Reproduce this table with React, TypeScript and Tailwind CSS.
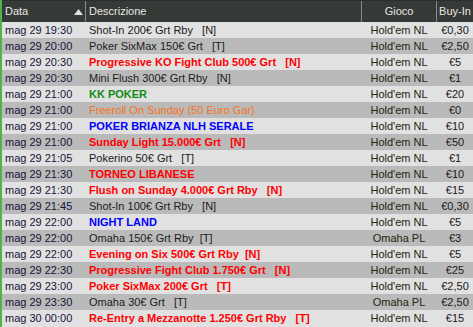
import clsx from "clsx";

type Row = {
  date: string;
  desc: string;
  tone?: "red" | "green" | "orange" | "blue";
  game?: string;
  buyIn: string;
};

const rows: Row[] = [
  { date: "mag 29 19:30", desc: "Shot-In 200€ Grt Rby   [N]", buyIn: "€0,30" },
  { date: "mag 29 20:00", desc: "Poker SixMax 150€ Grt   [T]", buyIn: "€2,50" },
  { date: "mag 29 20:30", desc: "Progressive KO Fight Club 500€ Grt   [N]", tone: "red", buyIn: "€5" },
  { date: "mag 29 20:30", desc: "Mini Flush 300€ Grt Rby   [N]", buyIn: "€1" },
  { date: "mag 29 21:00", desc: "KK POKER", tone: "green", buyIn: "€20" },
  { date: "mag 29 21:00", desc: "Freeroll On Sunday (50 Euro Gar)", tone: "orange", buyIn: "€0" },
  { date: "mag 29 21:00", desc: "POKER BRIANZA NLH SERALE", tone: "blue", buyIn: "€10" },
  { date: "mag 29 21:00", desc: "Sunday Light 15.000€ Grt   [N]", tone: "red", buyIn: "€50" },
  { date: "mag 29 21:05", desc: "Pokerino 50€ Grt   [T]", buyIn: "€1" },
  { date: "mag 29 21:30", desc: "TORNEO LIBANESE", tone: "red", buyIn: "€10" },
  { date: "mag 29 21:30", desc: "Flush on Sunday 4.000€ Grt Rby   [N]", tone: "red", buyIn: "€15" },
  { date: "mag 29 21:45", desc: "Shot-In 100€ Grt Rby   [N]", buyIn: "€0,30" },
  { date: "mag 29 22:00", desc: "NIGHT LAND", tone: "blue", buyIn: "€5" },
  { date: "mag 29 22:00", desc: "Omaha 150€ Grt Rby  [T]", game: "Omaha PL", buyIn: "€3" },
  { date: "mag 29 22:00", desc: "Evening on Six 500€ Grt Rby  [N]", tone: "red", buyIn: "€5" },
  { date: "mag 29 22:30", desc: "Progressive Fight Club 1.750€ Grt   [N]", tone: "red", buyIn: "€25" },
  { date: "mag 29 23:00", desc: "Poker SixMax 200€ Grt   [T]", tone: "red", buyIn: "€2,50" },
  { date: "mag 29 23:30", desc: "Omaha 30€ Grt   [T]", game: "Omaha PL", buyIn: "€2,50" },
  { date: "mag 30 00:00", desc: "Re-Entry a Mezzanotte 1.250€ Grt Rby   [T]", tone: "red", buyIn: "€15" },
];

const toneClass = {
  red: "text-[#ff0000] font-bold",
  green: "text-[#138a13] font-bold",
  orange: "text-[#f87218]",
  blue: "text-[#0000ff] font-bold",
};

export default function App() {
  return (
    <div className="w-[473px] h-[327px] overflow-hidden bg-[#e1e1e1] border-l-2 border-[#4fb24f] font-['Liberation_Sans',Arial,sans-serif] text-[11px]">
      <div className="flex h-[22px] bg-[#363a36] border-t border-[#2c2f2c] text-[#e6e6e6] leading-[21px]">
        <div className="w-[83px] flex items-center justify-between pl-[3px] pr-[2px]">
          <span>Data</span>
          <svg width="9" height="6" viewBox="0 0 9 6">
            <path d="M4.5 0 L9 6 L0 6 Z" fill="#e0e0e0" />
          </svg>
        </div>
        <div className="w-[276px] border-l border-[#8a8a8a] pl-[3px]">Descrizione</div>
        <div className="w-[75px] border-l border-[#8a8a8a] text-center">Gioco</div>
        <div className="flex-1 border-l border-[#8a8a8a] text-center">Buy-In</div>
      </div>

      {rows.map((r, i) => (
        <div
          key={i}
          className={clsx(
            "flex h-[16px] leading-[16px] whitespace-pre",
            i % 2 === 0 ? "bg-[#e1e1e1]" : "bg-[#bababa]"
          )}
        >
          <div className="w-[83px] pl-[3px] text-[#14143a]">{r.date}</div>
          <div className={clsx("w-[276px] pl-[4px]", r.tone ? toneClass[r.tone] : "text-[#1a1a1a]")}>
            {r.desc}
          </div>
          <div className="w-[76px] text-center text-[#24240c]">{r.game ?? "Hold'em NL"}</div>
          <div className="flex-1 text-center text-[#1a1a1a]">{r.buyIn}</div>
        </div>
      ))}
    </div>
  );
}
